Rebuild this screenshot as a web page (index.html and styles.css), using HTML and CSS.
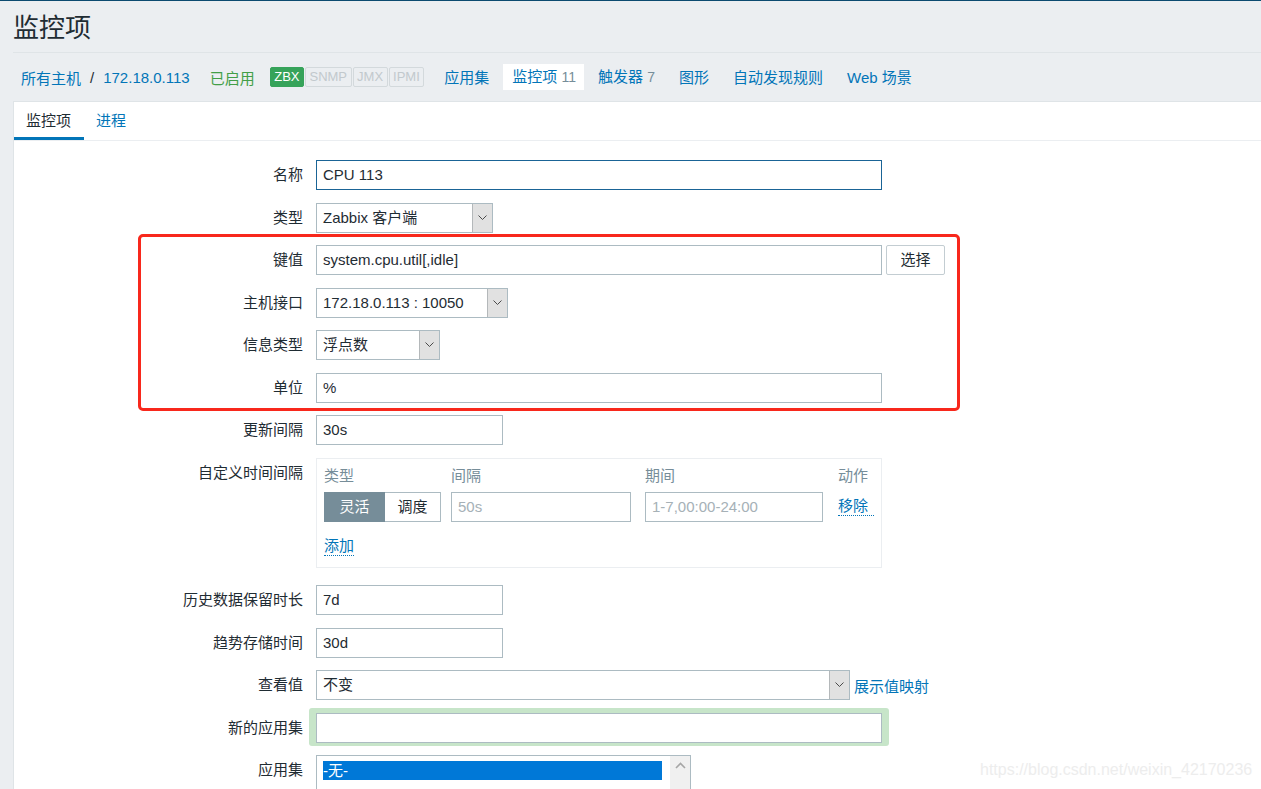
FILE: index.html
```html
<!DOCTYPE html>
<html lang="zh">
<head>
<meta charset="utf-8">
<title>监控项</title>
<link rel="stylesheet" href="styles.css">
</head>
<body>
<header class="page-header"><h1>监控项</h1></header>
<nav class="host-nav">
  <a class="link">所有主机</a><span class="sep">/</span><a class="link">172.18.0.113</a>
  <span class="enabled">已启用</span>
  <span class="status"><span class="st on">ZBX</span><span class="st">SNMP</span><span class="st">JMX</span><span class="st">IPMI</span></span>
  <ul class="links">
    <li><a class="link">应用集</a></li>
    <li class="sel"><span>监控项</span> <span class="cnt">11</span></li>
    <li><a class="link">触发器</a> <span class="cnt">7</span></li>
    <li><a class="link">图形</a></li>
    <li><a class="link">自动发现规则</a></li>
    <li><a class="link">Web 场景</a></li>
  </ul>
</nav>
<main class="content">
  <div class="tabs"><span class="tab active">监控项</span><span class="tab">进程</span></div>
  <div class="form">
    <div class="lbl">名称</div>
    <div><div class="field wide focus">CPU 113</div></div>

    <div class="lbl">类型</div>
    <div><div class="select w-type"><span class="sv">Zabbix 客户端</span><span class="arrow"><svg width="9" height="6" viewBox="0 0 9 6"><polyline points="0.5,0.5 4.5,4.5 8.5,0.5" fill="none" stroke="#4a4a4a" stroke-width="1"/></svg></span></div></div>

    <div class="lbl">键值</div>
    <div class="inline"><div class="field wide">system.cpu.util[,idle]</div><span class="btn">选择</span></div>

    <div class="lbl">主机接口</div>
    <div><div class="select w-iface"><span class="sv">172.18.0.113 : 10050</span><span class="arrow"><svg width="9" height="6" viewBox="0 0 9 6"><polyline points="0.5,0.5 4.5,4.5 8.5,0.5" fill="none" stroke="#4a4a4a" stroke-width="1"/></svg></span></div></div>

    <div class="lbl">信息类型</div>
    <div><div class="select w-info"><span class="sv">浮点数</span><span class="arrow"><svg width="9" height="6" viewBox="0 0 9 6"><polyline points="0.5,0.5 4.5,4.5 8.5,0.5" fill="none" stroke="#4a4a4a" stroke-width="1"/></svg></span></div></div>

    <div class="lbl">单位</div>
    <div><div class="field wide">%</div></div>

    <div class="lbl">更新间隔</div>
    <div><div class="field short">30s</div></div>

    <div class="lbl">自定义时间间隔</div>
    <div>
      <div class="intervals">
        <div class="iv-row iv-head"><span>类型</span><span>间隔</span><span>期间</span><span>动作</span></div>
        <div class="iv-row iv-body">
          <span class="seg"><span class="seg-on">灵活</span><span class="seg-off">调度</span></span>
          <span><span class="field iv-delay ph">50s</span></span>
          <span><span class="field iv-period ph">1-7,00:00-24:00</span></span>
          <span class="dlink">移除</span>
        </div>
        <div class="iv-add"><span class="dlink">添加</span></div>
      </div>
    </div>

    <div class="lbl">历史数据保留时长</div>
    <div><div class="field short">7d</div></div>

    <div class="lbl">趋势存储时间</div>
    <div><div class="field short">30d</div></div>

    <div class="lbl">查看值</div>
    <div class="inline"><div class="select w-view"><span class="sv">不变</span><span class="arrow"><svg width="9" height="6" viewBox="0 0 9 6"><polyline points="0.5,0.5 4.5,4.5 8.5,0.5" fill="none" stroke="#4a4a4a" stroke-width="1"/></svg></span></div><a class="link map">展示值映射</a></div>

    <div class="lbl">新的应用集</div>
    <div><div class="glow"><div class="field wide"></div></div></div>

    <div class="lbl">应用集</div>
    <div>
      <div class="listbox">
        <div class="opts"><div class="opt-sel">-无-</div></div>
        <div class="sbar"><svg width="11" height="7" viewBox="0 0 11 7"><polyline points="1,6 5.5,1.5 10,6" fill="none" stroke="#a6a6a6" stroke-width="1.6"/></svg></div>
      </div>
    </div>
  </div>
</main>
<div class="annot"></div>
<div class="watermark">https://blog.csdn.net/weixin_42170236</div>
</body>
</html>
```
FILE: styles.css
```css
* { box-sizing: border-box; }
html, body { margin: 0; height: 789px; overflow: hidden; }
body {
  background: #ebeef1;
  border-top: 1px solid #0b4a70;
  font-family: "Liberation Sans", "Noto Sans CJK SC", sans-serif;
  font-size: 15px;
  color: #1f2c33;
  position: relative;
}
.link { color: #0275b8; text-decoration: none; }

.page-header {
  margin-left: 13px;
  height: 52px;
  border-bottom: 1px solid #dfe4e7;
  display: flex;
  align-items: center;
  padding-top: 2px;
}
.page-header h1 {
  margin: 0;
  font-size: 26px;
  font-weight: normal;
  line-height: 30px;
  color: #1f2c33;
}

.host-nav {
  height: 48px;
  padding-left: 21px;
  display: flex;
  align-items: center;
  white-space: nowrap;
}
.host-nav .sep { margin: 0 9px; color: #1f2c33; }
.enabled { color: #429e47; margin-left: 20px; }
.status { display: flex; margin-left: 15px; }
.st {
  font-size: 13px;
  line-height: 18px;
  height: 20px;
  padding: 0 3.5px;
  border: 1px solid #d3d9dc;
  color: #c2c9cd;
  background: #ebeef1;
  margin-right: 1px;
  border-radius: 2px;
}
.st.on { background: #36a35a; border-color: #36a35a; color: #fff; }
.links { list-style: none; margin: 0 0 0 7px; padding: 0; display: flex; align-items: center; }
.links li { padding: 0 12px; line-height: 25px; }
.links li.sel { background: #fff; padding: 0 8px 0 9px; margin: 0 2px 0 2px; color: #0275b8; }
.cnt { color: #768d99; font-size: 14px; }

.content {
  margin-left: 13px;
  background: #fff;
  border-top: 1px solid #dfe4e7;
  border-left: 1px solid #dfe4e7;
  height: 700px;
}
.tabs {
  display: flex;
  height: 39px;
  border-bottom: 1px solid #ebeef1;
}
.tab {
  padding: 0 12px;
  height: 38px;
  line-height: 38px;
  color: #0275b8;
}
.tab.active {
  color: #1f2c33;
  border-bottom: 3px solid #0275b8;
  padding: 0 12px 0 12px;
  width: 70px;
}

.form {
  display: grid;
  grid-template-columns: 302px 1fr;
  row-gap: 12.5px;
  padding-top: 19px;
  align-items: start;
}
.lbl {
  text-align: right;
  padding-right: 13px;
  line-height: 30px;
  white-space: nowrap;
}
.inline { display: flex; align-items: center; }
.field {
  display: block;
  height: 30px;
  line-height: 28px;
  border: 1px solid #acbbc2;
  padding: 0 6px;
  background: #fff;
  white-space: nowrap;
  overflow: hidden;
}
.field.focus { border-color: #1a6496; }
.wide { width: 566px; }
.short { width: 187px; }
.ph { color: #a6b1b7; }
.btn {
  margin-left: 4px;
  width: 59px;
  height: 30px;
  line-height: 28px;
  text-align: center;
  border: 1px solid #c3cdd2;
  border-radius: 2px;
  background: #fff;
}

.select {
  display: flex;
  height: 30px;
  border: 1px solid #acbbc2;
  background: #fff;
}
.select .sv { flex: 1; line-height: 28px; padding: 0 6px; white-space: nowrap; }
.select .arrow {
  width: 20px;
  background: #e1e1e1;
  border-left: 1px solid #b4b8ba;
  display: flex;
  align-items: center;
  justify-content: center;
}
.w-type { width: 177px; }
.w-iface { width: 192px; }
.w-info { width: 124px; }
.w-view { width: 534px; }
.map { margin-left: 4px; }

.intervals {
  width: 566px;
  border: 1px solid #ebeef1;
  padding: 4px 7px 9px;
  margin-bottom: 5px;
}
.iv-row { display: grid; grid-template-columns: 127px 194px 193px auto; align-items: center; }
.iv-head { height: 24px; color: #768d99; }
.iv-body { margin-top: 5px; height: 30px; }
.seg { display: flex; height: 30px; width: 117px; }
.seg-on {
  width: 61px; background: #768d99; color: #fff; text-align: center; line-height: 30px;
}
.seg-off {
  width: 56px; border: 1px solid #acbbc2; border-left: none; text-align: center; line-height: 28px;
}
.iv-delay { width: 180px; }
.iv-period { width: 178px; }
.dlink { color: #0275b8; border-bottom: 1px dotted #0275b8; line-height: 18px; }
.iv-add { margin-top: 11px; height: 25px; line-height: 25px; }
.iv-add .dlink { display: inline-block; }

.glow {
  display: block;
  width: 580px;
  margin: -5px 0 -3px -7px;
  padding: 5px 7px 3px;
  background: #c7e5c9;
  border-radius: 3px;
}

.listbox {
  display: flex;
  width: 375px;
  height: 60px;
  border: 1px solid #acbbc2;
  background: #fff;
}
.opts { flex: 1; padding: 5px 0 0 6px; }
.opt-sel {
  width: 339px;
  height: 19px;
  line-height: 19px;
  background: #0078d7;
  color: #fff;
}
.sbar {
  width: 20px;
  background: #f0f0f0;
  display: flex;
  justify-content: center;
  padding-top: 6px;
}

.annot {
  position: absolute;
  left: 138px;
  top: 233px;
  width: 822px;
  height: 177px;
  border: 3px solid #f8281c;
  border-radius: 5px;
}
.watermark {
  position: absolute;
  left: 980px;
  top: 760px;
  font-size: 16px;
  color: #ededed;
  white-space: nowrap;
}
```
